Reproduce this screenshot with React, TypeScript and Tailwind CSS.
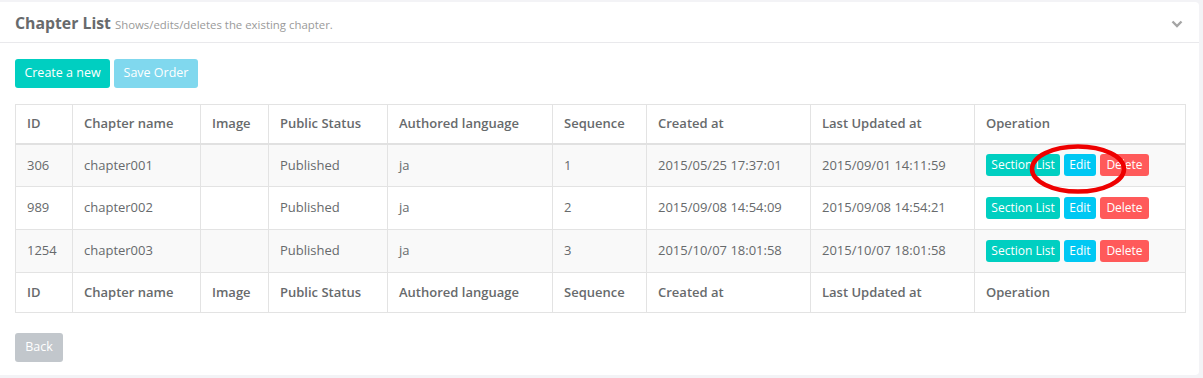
import React from "react";

const cols = [
  { name: "ID", w: 57 },
  { name: "Chapter name", w: 128 },
  { name: "Image", w: 68 },
  { name: "Public Status", w: 119 },
  { name: "Authored language", w: 165 },
  { name: "Sequence", w: 94 },
  { name: "Created at", w: 164 },
  { name: "Last Updated at", w: 164 },
  { name: "Operation", w: 211 },
];

const rows = [
  ["306", "chapter001", "", "Published", "ja", "1", "2015/05/25 17:37:01", "2015/09/01 14:11:59"],
  ["989", "chapter002", "", "Published", "ja", "2", "2015/09/08 14:54:09", "2015/09/08 14:54:21"],
  ["1254", "chapter003", "", "Published", "ja", "3", "2015/10/07 18:01:58", "2015/10/07 18:01:58"],
];

function HeadRow({ foot }: { foot?: boolean }) {
  return (
    <tr className={foot ? "" : "border-b-2 border-[#e1e1e1]"}>
      {cols.map((c) => (
        <th
          key={c.name}
          style={{ width: c.w }}
          className={`${foot ? "h-[40px]" : "h-[39px]"} border border-[#e3e3e3] px-[11px] text-left align-middle text-[13px] font-semibold text-[#676a6c]`}
        >
          {c.name}
        </th>
      ))}
    </tr>
  );
}

export default function App() {
  return (
    <div
      className="relative h-[378px] w-[1203px] bg-[#f3f3f6] pt-[2px] pr-[4px]"
      style={{ fontFamily: '"Open Sans", "Noto Sans", sans-serif' }}
    >
      <div className="h-[373px] w-[1199px] rounded-r-[4px] bg-white">
        <div className="flex h-[41px] items-center justify-between border-b border-[#e9e9ec] pl-[15px] pr-[16px]">
          <div className="flex items-baseline gap-[4px] pt-[3px]">
            <span className="text-[15.8px] font-bold text-[#676a6c]">Chapter List</span>
            <span className="text-[11.4px] text-[#9a9a9a]">Shows/edits/deletes the existing chapter.</span>
          </div>
          <svg width="12" height="8" viewBox="0 0 12 8" className="mt-[3px]">
            <path d="M1.5 1.5 L6 6 L10.5 1.5" fill="none" stroke="#a5a5a5" strokeWidth="2.4" />
          </svg>
        </div>
        <div className="px-[15px]">
          <div className="mt-[16px] flex gap-[4px]">
            <button className="h-[29px] w-[95px] rounded-[3px] bg-[#00cfc1] text-[12.5px] text-white">Create a new</button>
            <button className="h-[29px] w-[84px] rounded-[3px] bg-[#80d8ee] text-[12.5px] text-white">Save Order</button>
          </div>
          <table className="mt-[16px] w-[1170px] table-fixed border-collapse">
            <thead>
              <HeadRow />
            </thead>
            <tbody>
              {rows.map((r, i) => (
                <tr key={r[0]} className={i % 2 === 0 ? "bg-[#f9f9f9]" : "bg-white"}>
                  {r.map((v, j) => (
                    <td
                      key={j}
                      className="h-[43px] border border-[#e3e3e3] px-[11px] align-middle text-[13px] text-[#676a6c]"
                    >
                      {v}
                    </td>
                  ))}
                  <td className="h-[43px] border border-[#e3e3e3] px-[11px] align-middle">
                    <div className="flex gap-[4px]">
                      <button className="h-[22px] w-[74px] rounded-[3px] bg-[#00cfc1] text-[12px] text-white">Section List</button>
                      <button className="h-[22px] w-[32px] rounded-[3px] bg-[#00c8f3] text-[12px] text-white">Edit</button>
                      <button className="h-[22px] w-[49px] rounded-[3px] bg-[#ff5a5a] text-[12px] text-white">Delete</button>
                    </div>
                  </td>
                </tr>
              ))}
            </tbody>
            <tfoot>
              <HeadRow foot />
            </tfoot>
          </table>
          <button className="mt-[20px] h-[29px] w-[48px] rounded-[3px] bg-[#c2c7cc] text-[12.5px] text-white">Back</button>
        </div>
      </div>
      <svg className="pointer-events-none absolute left-[1028px] top-[143px]" width="100" height="52" viewBox="0 0 100 52">
        <ellipse cx="50" cy="26" rx="46" ry="22.5" fill="none" stroke="#ee0000" strokeWidth="4.5" />
      </svg>
    </div>
  );
}
